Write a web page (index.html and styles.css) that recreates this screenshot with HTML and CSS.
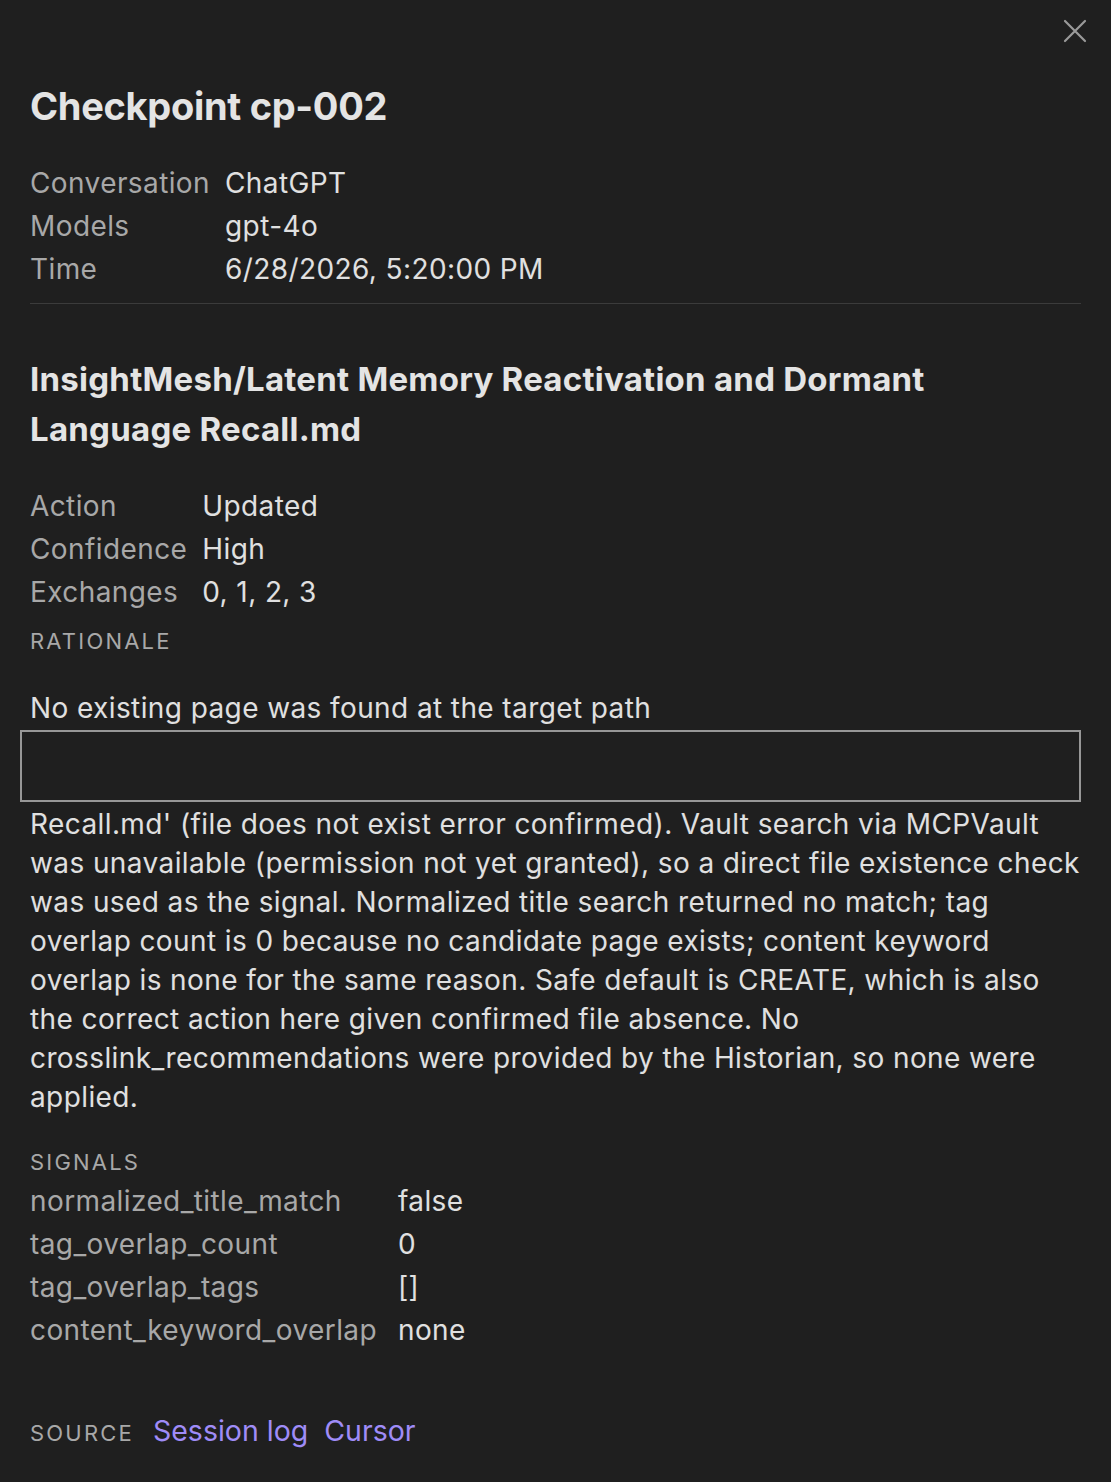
FILE: index.html
```html
<!DOCTYPE html>
<html lang="en">
<head>
<meta charset="utf-8">
<title>Checkpoint cp-002</title>
<link rel="stylesheet" href="styles.css">
</head>
<body>
<div class="panel">
  <button class="close" aria-label="Close">
    <svg width="24" height="24" viewBox="0 0 24 24"><path d="M2 2 L22 22 M22 2 L2 22" stroke="#9a9a9a" stroke-width="2.2" stroke-linecap="round" fill="none"/></svg>
  </button>
  <h1 class="title">Checkpoint cp-002</h1>
  <table class="meta">
    <tr><td class="k">Conversation</td><td class="v">ChatGPT</td></tr>
    <tr><td class="k">Models</td><td class="v">gpt-4o</td></tr>
    <tr><td class="k">Time</td><td class="v">6/28/2026, 5:20:00 PM</td></tr>
  </table>
  <hr class="divider">
  <h2 class="page-title">InsightMesh/Latent Memory Reactivation and Dormant Language Recall.md</h2>
  <table class="meta meta-page">
    <tr><td class="k">Action</td><td class="v">Updated</td></tr>
    <tr><td class="k">Confidence</td><td class="v">High</td></tr>
    <tr><td class="k">Exchanges</td><td class="v">0, 1, 2, 3</td></tr>
  </table>
  <div class="section-label rationale-label">Rationale</div>
  <p class="para first">No existing page was found at the target path</p>
  <div class="blank-box"></div>
  <p class="para">Recall.md' (file does not exist error confirmed). Vault search via MCPVault was unavailable (permission not yet granted), so a direct file existence check was used as the signal. Normalized title search returned no match; tag overlap count is 0 because no candidate page exists; content keyword overlap is none for the same reason. Safe default is CREATE, which is also the correct action here given confirmed file absence. No crosslink_recommendations were provided by the Historian, so none were applied.</p>
  <div class="section-label signals-label">Signals</div>
  <table class="meta signals">
    <tr><td class="k">normalized_title_match</td><td class="v">false</td></tr>
    <tr><td class="k">tag_overlap_count</td><td class="v">0</td></tr>
    <tr><td class="k">tag_overlap_tags</td><td class="v">[]</td></tr>
    <tr><td class="k">content_keyword_overlap</td><td class="v">none</td></tr>
  </table>
  <div class="source">
    <span class="section-label source-label">Source</span>
    <a class="link" href="#">Session log</a>
    <a class="link" href="#">Cursor</a>
  </div>
</div>
</body>
</html>
```
FILE: styles.css
```css
html, body {
  margin: 0;
  padding: 0;
  background: #1f1f1f;
}
body {
  font-family: Inter, "Noto Sans", "Liberation Sans", sans-serif;
  color: #dedede;
  -webkit-font-smoothing: antialiased;
}
.panel {
  position: relative;
  padding: 84px 30px 40px 30px;
  min-height: 1482px;
  box-sizing: border-box;
}
.close {
  position: absolute;
  top: 19px;
  right: 24px;
  background: none;
  border: 0;
  padding: 0;
  width: 24px;
  height: 24px;
  cursor: pointer;
}
.close svg { display: block; }
.title {
  margin: 0 0 34px 0;
  font-size: 38px;
  line-height: 44px;
  font-weight: 700;
  color: #e4e4e4;
  letter-spacing: -0.3px;
}
.meta {
  border-collapse: collapse;
  font-size: 28px;
  line-height: 43px;
  letter-spacing: 0.4px;
}
.meta td {
  padding: 0;
  white-space: nowrap;
  vertical-align: top;
}
.meta .k {
  color: #a8a8a8;
  padding-right: 15px;
}
.meta .v {
  color: #e0e0e0;
}
.signals .k {
  padding-right: 21px;
}
.divider {
  border: 0;
  height: 1px;
  background: #3b3b3b;
  margin: 12px 0 0 0;
}
.page-title {
  margin: 50px 0 31px 0;
  font-size: 33px;
  line-height: 50px;
  font-weight: 700;
  color: #e4e4e4;
  letter-spacing: 0.25px;
}
.section-label {
  font-size: 22px;
  line-height: 30px;
  text-transform: uppercase;
  letter-spacing: 2.2px;
  color: #a8a8a8;
}
.rationale-label {
  margin-top: 12px;
}
.para {
  margin: 0;
  font-size: 28px;
  line-height: 39px;
  color: #e0e0e0;
  letter-spacing: 0.4px;
}
.para.first {
  margin-top: 33px;
}
.blank-box {
  margin: 2px 0 3px -10px;
  height: 72px;
  box-sizing: border-box;
  border: 2px solid #979797;
}
.signals-label {
  margin-top: 30px;
}
.signals {
  margin-top: 3px;
}
.source {
  display: flex;
  align-items: baseline;
  gap: 16px;
  margin-top: 59px;
  line-height: 39px;
}
.source-label {
  margin-right: 3px;
}
.link {
  font-size: 28.5px;
  color: #9f8cf7;
  text-decoration: none;
}
```
